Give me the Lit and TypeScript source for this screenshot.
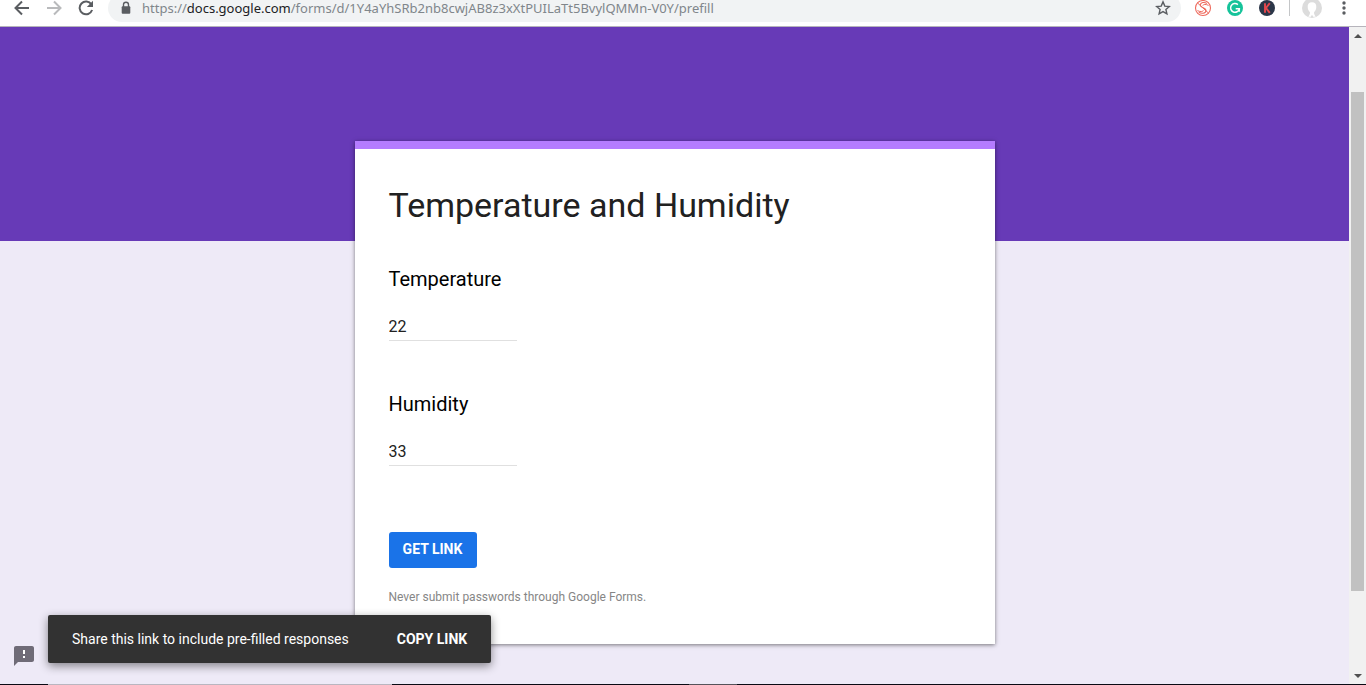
import { LitElement, html, css } from "lit";
import { customElement, property } from "lit/decorators.js";

@customElement("browser-toolbar")
class BrowserToolbar extends LitElement {
  static styles = css`
    :host {
      display: block;
      flex: none;
      box-sizing: border-box;
      height: 27px;
      overflow: hidden;
      background: #fff;
      border-bottom: 1px solid #b6b4bb;
    }
    .row {
      display: flex;
      align-items: center;
      height: 28px;
      margin-top: -6px;
      padding: 0 10px 0 8px;
    }
    button {
      display: flex;
      align-items: center;
      justify-content: center;
      flex: none;
      width: 32px;
      height: 28px;
      padding: 0;
      border: 0;
      background: none;
      color: #5a5d61;
    }
    svg {
      display: block;
      flex: none;
    }
    .nav {
      width: 28px;
      margin-right: 4px;
    }
    .dim {
      color: #b9babc;
    }
    .omnibox {
      display: flex;
      align-items: center;
      flex: 1;
      min-width: 0;
      height: 28px;
      margin-left: 4px;
      padding: 0 2px 0 12px;
      border-radius: 14px;
      background: #f1f3f4;
      box-sizing: border-box;
    }
    .url {
      flex: 1;
      min-width: 0;
      margin-left: 10px;
      white-space: nowrap;
      font: 13px/16px "Noto Sans", "Open Sans", sans-serif;
      color: #80868b;
    }
    .host {
      color: #202124;
    }
    .extensions {
      display: flex;
      align-items: center;
      margin-left: 6px;
    }
    .divider {
      width: 1px;
      height: 16px;
      margin: 0 6px;
      background: #c4c6c8;
    }
    .menu {
      width: 24px;
      margin-left: 4px;
    }
  `;

  render() {
    return html`
      <div class="row">
        <button class="nav" aria-label="Back">
          <svg width="16" height="16" viewBox="0 0 16 16" fill="none" stroke="currentColor" stroke-width="2">
            <path d="M15 8H2M8 1.5L1.5 8L8 14.5" />
          </svg>
        </button>
        <button class="nav dim" aria-label="Forward">
          <svg width="16" height="16" viewBox="0 0 16 16" fill="none" stroke="currentColor" stroke-width="2">
            <path d="M1 8H14M8 1.5L14.5 8L8 14.5" />
          </svg>
        </button>
        <button class="nav" aria-label="Reload">
          <svg width="16" height="16" viewBox="0 0 16 16">
            <path d="M13.4 4.4A6.4 6.4 0 1 0 14.1 10" fill="none" stroke="currentColor" stroke-width="2" />
            <path d="M15 .8V7H8.8Z" fill="currentColor" />
          </svg>
        </button>
        <div class="omnibox">
          <svg width="12" height="14" viewBox="0 0 12 14">
            <path d="M3.5 6V3.8a2.5 2.5 0 0 1 5 0V6" fill="none" stroke="#5a5d61" stroke-width="1.4" />
            <rect x="1.7" y="5.2" width="8.6" height="7.6" rx="1" fill="#5a5d61" />
          </svg>
          <div class="url">https://<span class="host">docs.google.com</span>/forms/d/1Y4aYhSRb2nb8cwjAB8z3xXtPUILaTt5BvylQMMn-V0Y/prefill</div>
          <button aria-label="Bookmark this page">
            <svg width="16" height="16" viewBox="0 0 16 16">
              <path d="M8 1.9L9.8 6.1L14.3 6.5L10.9 9.5L11.9 13.9L8 11.6L4.1 13.9L5.1 9.5L1.7 6.5L6.2 6.1Z" fill="none" stroke="#5a5d61" stroke-width="1.4" />
            </svg>
          </button>
        </div>
        <div class="extensions">
          <button aria-label="Extension">
            <svg width="18" height="18" viewBox="0 0 18 18" fill="none" stroke="#ee6a5d">
              <circle cx="9" cy="9" r="7.5" stroke-width="1.1" />
              <path d="M12.8 4.6C10.5 2.6 6.4 3.4 6.3 6C6.2 9.3 12.2 8.4 12 11.8C11.8 14.8 6.8 15 4.8 12.8" stroke-width="1.1" />
              <path d="M3.6 4L14.4 14M3.4 11.6C6 13 9.2 12.8 9.4 11.4M14.6 6.4C12 5 9 5.2 8.8 6.6" stroke-width="1" />
            </svg>
          </button>
          <button aria-label="Grammar checker">
            <svg width="16" height="16" viewBox="0 0 16 16">
              <circle cx="8" cy="8" r="8" fill="#15c39a" />
              <path d="M10.9 4.6A4.4 4.4 0 1 0 12.3 8.8H8.7M12.3 8.5V11.8" fill="none" stroke="#fff" stroke-width="1.5" />
            </svg>
          </button>
          <button aria-label="Extension K">
            <svg width="16" height="16" viewBox="0 0 16 16">
              <circle cx="8" cy="8" r="8" fill="#2b3648" />
              <path d="M6 3.2V12.8M10.8 3.2L7 8L10.8 12.8" fill="none" stroke="#e5484d" stroke-width="1.9" />
            </svg>
          </button>
        </div>
        <span class="divider"></span>
        <button aria-label="Profile">
          <svg width="20" height="20" viewBox="0 0 20 20">
            <circle cx="10" cy="10" r="10" fill="#dcdcdc" />
            <path d="M10 4.2c-3 0-4.5 2-4.3 4.700c.1 2.300 1 4.200 2.200 5.200c.3 1.700-.3 3-1.700 4.600h2.600l1.200-2l1.200 2h2.600c-1.400-1.600-2-2.900-1.700-4.600c1.200-1 2.100-2.900 2.200-5.200c.2-2.700-1.300-4.700-4.300-4.700z" fill="#fff" />
          </svg>
        </button>
        <button class="menu" aria-label="Menu">
          <svg width="4" height="16" viewBox="0 0 4 16" fill="#5a5d61">
            <circle cx="2" cy="3" r="1.7" />
            <circle cx="2" cy="8" r="1.7" />
            <circle cx="2" cy="13" r="1.7" />
          </svg>
        </button>
      </div>
    `;
  }
}

@customElement("page-scrollbar")
class PageScrollbar extends LitElement {
  static styles = css`
    :host {
      display: flex;
      flex-direction: column;
      flex: none;
      width: 17px;
      background: #f1f1f1;
    }
    .arrow {
      display: flex;
      align-items: center;
      justify-content: center;
      height: 17px;
    }
    .track {
      display: grid;
      grid-template-rows: 48fr 499fr 76fr;
      flex: 1;
      padding: 0 2px;
    }
    .thumb {
      grid-row: 2;
      background: #c1c1c1;
    }
  `;

  render() {
    return html`
      <div class="arrow">
        <svg width="8" height="4" viewBox="0 0 8 4"><path d="M0 4L4 0L8 4Z" fill="#505050" /></svg>
      </div>
      <div class="track"><div class="thumb"></div></div>
      <div class="arrow">
        <svg width="8" height="4" viewBox="0 0 8 4"><path d="M0 0L4 4L8 0Z" fill="#505050" /></svg>
      </div>
    `;
  }
}

@customElement("form-question")
class FormQuestion extends LitElement {
  @property() name = "";
  @property() value = "";

  static styles = css`
    :host {
      display: block;
    }
    label {
      display: block;
      font-size: 20px;
      line-height: 28px;
      color: #000;
    }
    input {
      display: block;
      box-sizing: border-box;
      width: 128px;
      height: 28px;
      margin-top: 20px;
      padding: 0;
      border: 0;
      border-bottom: 1px solid #e0e0e0;
      outline: none;
      background: none;
      font: 16px/24px Roboto, sans-serif;
      color: #212121;
    }
  `;

  render() {
    return html`
      <label for="answer">${this.name}</label>
      <input id="answer" type="text" .value=${this.value} />
    `;
  }
}

@customElement("app-root")
class AppRoot extends LitElement {
  private questions = [
    { name: "Temperature", value: "22" },
    { name: "Humidity", value: "33" },
  ];

  static styles = css`
    :host {
      display: flex;
      flex-direction: column;
      height: 100vh;
      overflow: hidden;
      font-family: Roboto, sans-serif;
    }
    .window {
      display: flex;
      flex: 1;
      min-height: 0;
    }
    .page {
      position: relative;
      flex: 1;
      min-width: 0;
      overflow: hidden;
      background: #eeeaf7;
    }
    .banner {
      height: 214px;
      background: #673ab7;
    }
    .card {
      box-sizing: border-box;
      width: 640px;
      max-width: 100%;
      margin: -100px auto 0;
      padding: 33px 34px 37px;
      border-top: 8px solid #b47cff;
      background: #fff;
      box-shadow: 0 1px 4px rgba(0, 0, 0, 0.5);
    }
    h1 {
      margin: 0;
      font-size: 34px;
      font-weight: 400;
      line-height: 46px;
      color: #212121;
    }
    .questions {
      display: grid;
      gap: 49px;
      margin-top: 37px;
    }
    .submit {
      display: block;
      min-width: 88px;
      height: 36px;
      margin-top: 66px;
      padding: 0 14px 2px;
      border: 0;
      border-radius: 3px;
      background: #1a73e8;
      color: #fff;
      font: 700 14px/20px Roboto, sans-serif;
    }
    .note {
      margin: 19px 0 0;
      font-size: 12px;
      line-height: 20px;
      color: #868686;
    }
    .report {
      position: absolute;
      left: 12px;
      bottom: 16px;
      padding: 0;
      border: 0;
      background: none;
    }
    .report svg {
      display: block;
    }
    .toast {
      position: absolute;
      left: 48px;
      bottom: 21px;
      display: flex;
      align-items: center;
      gap: 48px;
      height: 48px;
      padding: 0 24px;
      border-radius: 2px;
      background: #323232;
      color: #fff;
      font-size: 14px;
      font-weight: 400;
      box-shadow: 0 3px 10px rgba(0, 0, 0, 0.45);
    }
    .toast button {
      padding: 0;
      border: 0;
      background: none;
      color: #fff;
      font: 700 14px/20px Roboto, sans-serif;
    }
    .taskbar {
      display: grid;
      grid-template-columns: 48fr 344fr 297fr 48fr 629fr;
      flex: none;
      height: 1px;
      background: #0a0a14;
    }
    .search {
      grid-column: 2;
      background: #b9b6c0;
    }
    .active {
      grid-column: 4;
      background: #55535a;
    }
  `;

  render() {
    return html`
      <browser-toolbar></browser-toolbar>
      <div class="window">
        <main class="page">
          <div class="banner"></div>
          <form class="card" @submit=${(e: Event) => e.preventDefault()}>
            <h1>Temperature and Humidity</h1>
            <div class="questions">
              ${this.questions.map(
                (q) => html`<form-question .name=${q.name} .value=${q.value}></form-question>`
              )}
            </div>
            <button class="submit" type="submit">GET LINK</button>
            <p class="note">Never submit passwords through Google Forms.</p>
          </form>
          <button class="report" aria-label="Report a problem">
            <svg width="24" height="24" viewBox="0 0 24 24">
              <path d="M11 6h2v8h-2z" fill="#fff" />
              <path d="M20 2H4c-1.100 0-1.990.9-1.990 2L2 22l4-4h14c1.100 0 2-.9 2-2V4c0-1.100-.9-2-2-2zm-7 12h-2v-2h2v2zm0-4h-2V6h2v4z" fill="#6f6b77" />
            </svg>
          </button>
          <div class="toast" role="status">
            <span>Share this link to include pre-filled responses</span>
            <button type="button">COPY LINK</button>
          </div>
        </main>
        <page-scrollbar></page-scrollbar>
      </div>
      <div class="taskbar"><span class="search"></span><span class="active"></span></div>
    `;
  }
}
